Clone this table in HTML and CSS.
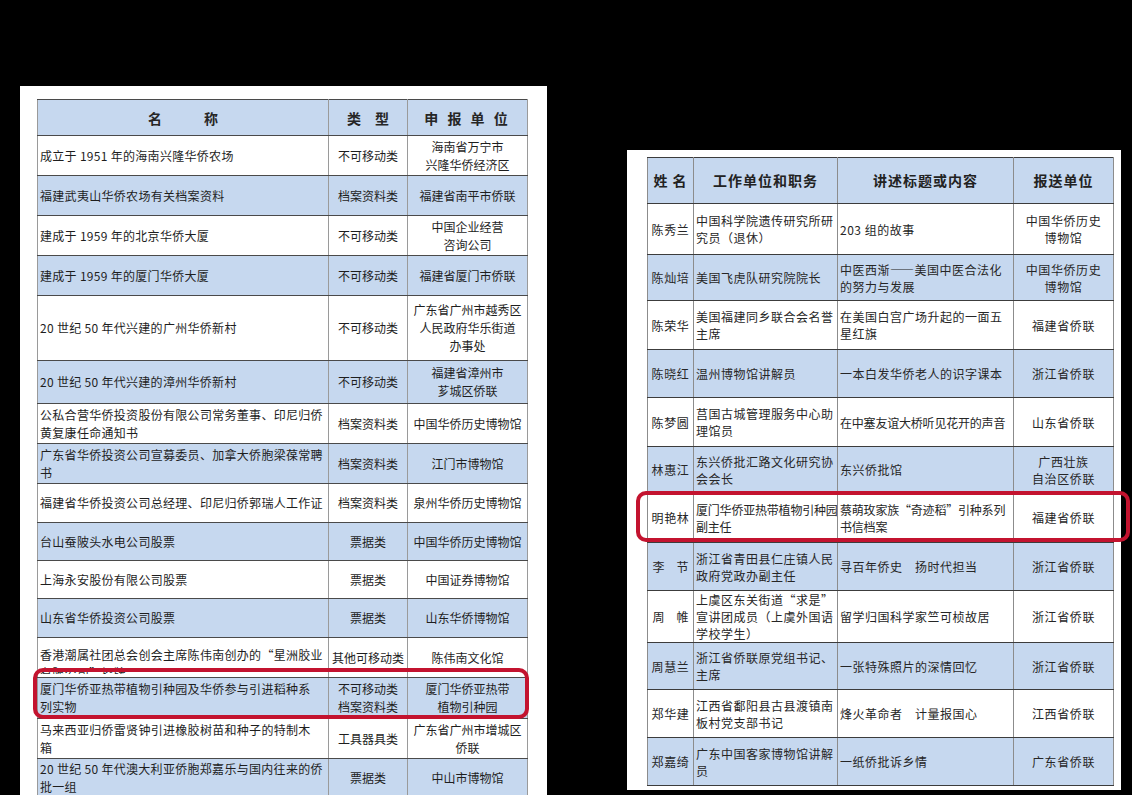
FILE: index.html
```html
<!DOCTYPE html>
<html lang="zh">
<head>
<meta charset="utf-8">
<link rel="stylesheet" href="styles.css">
</head>
<body>
<div class="stage">
  <div class="panel panel-left">
    <table class="tbl tbl-left">
      <colgroup><col class="c-name"><col class="c-type"><col class="c-unit"></colgroup>
      <tr class="head h36"><th>名　　　称</th><th>类　型</th><th class="spaced">申 报 单 位</th></tr>
      <tr class="w h40"><td class="l">成立于 1951 年的海南兴隆华侨农场</td><td>不可移动类</td><td>海南省万宁市<br>兴隆华侨经济区</td></tr>
      <tr class="b h40"><td class="l">福建武夷山华侨农场有关档案资料</td><td>档案资料类</td><td>福建省南平市侨联</td></tr>
      <tr class="w h40"><td class="l">建成于 1959 年的北京华侨大厦</td><td>不可移动类</td><td>中国企业经营<br>咨询公司</td></tr>
      <tr class="b h40"><td class="l">建成于 1959 年的厦门华侨大厦</td><td>不可移动类</td><td>福建省厦门市侨联</td></tr>
      <tr class="w h65"><td class="l">20 世纪 50 年代兴建的广州华侨新村</td><td>不可移动类</td><td>广东省广州市越秀区<br>人民政府华乐街道<br>办事处</td></tr>
      <tr class="b h43"><td class="l">20 世纪 50 年代兴建的漳州华侨新村</td><td>不可移动类</td><td>福建省漳州市<br>芗城区侨联</td></tr>
      <tr class="w h40"><td class="l">公私合营华侨投资股份有限公司常务董事、印尼归侨<br>黄复康任命通知书</td><td>档案资料类</td><td>中国华侨历史博物馆</td></tr>
      <tr class="b h40"><td class="l">广东省华侨投资公司宣募委员、加拿大侨胞梁葆常聘<br>书</td><td>档案资料类</td><td>江门市博物馆</td></tr>
      <tr class="w h39"><td class="l">福建省华侨投资公司总经理、印尼归侨郭瑞人工作证</td><td>档案资料类</td><td>泉州华侨历史博物馆</td></tr>
      <tr class="b h38"><td class="l">台山蚕陂头水电公司股票</td><td>票据类</td><td>中国华侨历史博物馆</td></tr>
      <tr class="w h38"><td class="l">上海永安股份有限公司股票</td><td>票据类</td><td>中国证券博物馆</td></tr>
      <tr class="b h39"><td class="l">山东省华侨投资公司股票</td><td>票据类</td><td>山东华侨博物馆</td></tr>
      <tr class="w h40"><td class="l"><div class="clip">香港潮属社团总会创会主席陈伟南创办的“星洲胶业<br>有限公司”招牌</div></td><td>其他可移动类</td><td>陈伟南文化馆</td></tr>
      <tr class="b h41"><td class="l">厦门华侨亚热带植物引种园及华侨参与引进稻种系<br>列实物</td><td>不可移动类<br>档案资料类</td><td>厦门华侨亚热带<br>植物引种园</td></tr>
      <tr class="w h40"><td class="l">马来西亚归侨雷贤钟引进橡胶树苗和种子的特制木<br>箱</td><td>工具器具类</td><td>广东省广州市增城区<br>侨联</td></tr>
      <tr class="b h38"><td class="l">20 世纪 50 年代澳大利亚侨胞郑嘉乐与国内往来的侨<br>批一组</td><td>票据类</td><td>中山市博物馆</td></tr>
    </table>
    <div class="mark mark-left"></div>
  </div>

  <div class="panel panel-right">
    <table class="tbl tbl-right">
      <colgroup><col class="r-name"><col class="r-job"><col class="r-title"><col class="r-unit"></colgroup>
      <tr class="head h46"><th>姓 名</th><th>工作单位和职务</th><th>讲述标题或内容</th><th>报送单位</th></tr>
      <tr class="w h51"><td>陈秀兰</td><td class="l">中国科学院遗传研究所研<br>究员（退休）</td><td class="l">203 组的故事</td><td>中国华侨历史<br>博物馆</td></tr>
      <tr class="b h46"><td>陈灿培</td><td class="l">美国飞虎队研究院院长</td><td class="l">中医西渐——美国中医合法化<br>的努力与发展</td><td>中国华侨历史<br>博物馆</td></tr>
      <tr class="w h49"><td>陈荣华</td><td class="l">美国福建同乡联合会名誉<br>主席</td><td class="l">在美国白宫广场升起的一面五<br>星红旗</td><td>福建省侨联</td></tr>
      <tr class="b h48"><td>陈晓红</td><td class="l">温州博物馆讲解员</td><td class="l">一本白发华侨老人的识字课本</td><td>浙江省侨联</td></tr>
      <tr class="w h49"><td>陈梦圆</td><td class="l">莒国古城管理服务中心助<br>理馆员</td><td class="l tight">在中塞友谊大桥听见花开的声音</td><td>山东省侨联</td></tr>
      <tr class="b h46"><td>林惠江</td><td class="l">东兴侨批汇路文化研究协<br>会会长</td><td class="l">东兴侨批馆</td><td>广西壮族<br>自治区侨联</td></tr>
      <tr class="w h50"><td>明艳林</td><td class="l tight">厦门华侨亚热带植物引种园<br>副主任</td><td class="l tight">蔡萌玫家族“奇迹稻”引种系列<br>书信档案</td><td>福建省侨联</td></tr>
      <tr class="b h48"><td class="just">李　节</td><td class="l">浙江省青田县仁庄镇人民<br>政府党政办副主任</td><td class="l">寻百年侨史　扬时代担当</td><td>浙江省侨联</td></tr>
      <tr class="w h52"><td class="just">周　帷</td><td class="l">上虞区东关街道“求是”<br>宣讲团成员（上虞外国语<br>学校学生）</td><td class="l">留学归国科学家竺可桢故居</td><td>浙江省侨联</td></tr>
      <tr class="b h47"><td>周慧兰</td><td class="l">浙江省侨联原党组书记、<br>主席</td><td class="l">一张特殊照片的深情回忆</td><td>浙江省侨联</td></tr>
      <tr class="w h48"><td>郑华建</td><td class="l">江西省鄱阳县古县渡镇南<br>板村党支部书记</td><td class="l">烽火革命者　计量报国心</td><td>江西省侨联</td></tr>
      <tr class="b h48"><td>郑嘉绮</td><td class="l">广东中国客家博物馆讲解<br>员</td><td class="l">一纸侨批诉乡情</td><td>广东省侨联</td></tr>
    </table>
    <div class="mark mark-right"></div>
  </div>
</div>
</body>
</html>
```

FILE: styles.css
```css
html, body {
  margin: 0;
  padding: 0;
  background: #000;
}
body {
  width: 1132px;
  height: 795px;
  overflow: hidden;
  font-family: "Noto Sans CJK SC", "Noto Sans", sans-serif;
  color: #1e1e1e;
}
.stage {
  display: flex;
  align-items: flex-start;
  gap: 80px;
  padding-left: 20px;
}
.panel {
  position: relative;
  background: #fff;
  box-sizing: border-box;
}
.panel-left {
  margin-top: 86px;
  width: 527px;
  height: 720px;
  padding: 13px 20px 0 17px;
}
.panel-right {
  margin-top: 150px;
  width: 494px;
  height: 640px;
  padding: 7px 8px 0 20px;
}
.tbl {
  border-collapse: collapse;
  table-layout: fixed;
}
.tbl th, .tbl td {
  padding: 0 2px;
  text-align: center;
  vertical-align: middle;
  white-space: nowrap;
  overflow: hidden;
}
.tbl-left {
  width: 490px;
  border: 1px solid #4a4a4a;
  font-size: 12px;
  line-height: 18px;
}
.tbl-left th, .tbl-left td {
  border-left: 1px solid #9a9a9a;
  border-right: 1px solid #9a9a9a;
  border-top: 1px solid #4a4a4a;
  border-bottom: 1px solid #4a4a4a;
}
.tbl-left th {
  font-size: 14px;
  font-weight: 600;
  color: #262626;
}
.c-name { width: 291px; }
.c-type { width: 79px; }
.c-unit { width: 120px; }
.tbl-left td.l { text-align: left; padding-left: 2px; letter-spacing: 0.3px; }
.spaced { letter-spacing: 3px; }
.clip { height: 33px; overflow: hidden; line-height: 18px; padding-top: 5px; box-sizing: border-box; }

.tbl-right {
  width: 466px;
  border: 1px solid #3c3c3c;
  font-size: 12px;
  line-height: 17px;
  color: #262626;
}
.tbl-right th, .tbl-right td {
  border-left: 1px solid #8c8c8c;
  border-right: 1px solid #8c8c8c;
  border-top: 1px solid #3c3c3c;
  border-bottom: 1px solid #3c3c3c;
  letter-spacing: 0.6px;
}
.tbl-right th {
  font-size: 14px;
  font-weight: 600;
  letter-spacing: 1px;
  color: #222;
}
.r-name { width: 46px; }
.r-job { width: 144px; }
.r-title { width: 176px; }
.r-unit { width: 100px; }
.tbl-right td.l { text-align: left; padding-left: 2px; padding-right: 0; letter-spacing: 0.5px; }
.tbl-right td.tight { letter-spacing: -0.2px; }
.tbl-right td.just { letter-spacing: 0; }

.head { background: #c6d8ef; }
.b { background: #c6d8ef; }
.w { background: #fff; }

.h36 { height: 36px; }
.h38 { height: 38px; }
.h39 { height: 39px; }
.h40 { height: 40px; }
.h41 { height: 41px; }
.h43 { height: 43px; }
.h46 { height: 46px; }
.h47 { height: 47px; }
.h48 { height: 48px; }
.h49 { height: 49px; }
.h50 { height: 50px; }
.h51 { height: 51px; }
.h52 { height: 52px; }
.h65 { height: 65px; }

.mark {
  position: absolute;
  border: 4px solid #c3132f;
  border-radius: 10px;
  box-sizing: border-box;
  pointer-events: none;
}
.mark-left {
  left: 13px;
  top: 582px;
  width: 496px;
  height: 51px;
}
.mark-right {
  left: 9px;
  top: 341px;
  width: 494px;
  height: 51px;
}
```
